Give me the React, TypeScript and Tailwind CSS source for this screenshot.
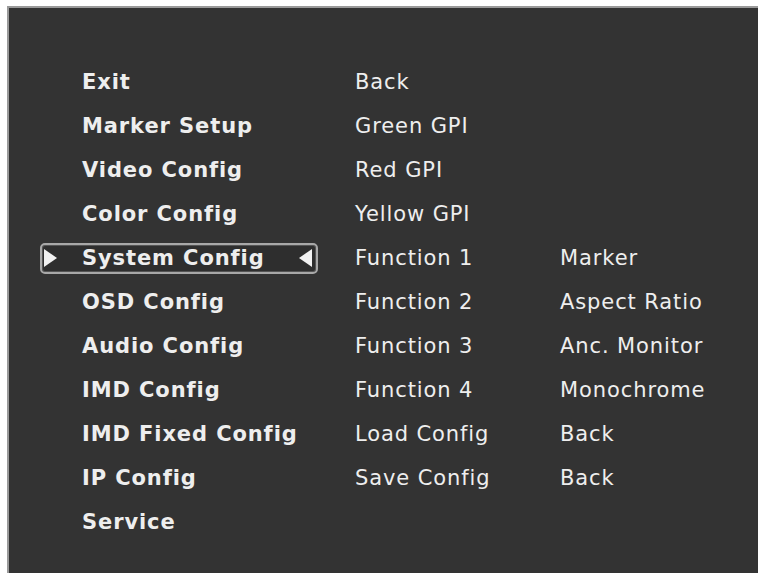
import React from "react";

const rows: [string, string, string][] = [
  ["Exit", "Back", ""],
  ["Marker Setup", "Green GPI", ""],
  ["Video Config", "Red GPI", ""],
  ["Color Config", "Yellow GPI", ""],
  ["System Config", "Function 1", "Marker"],
  ["OSD Config", "Function 2", "Aspect Ratio"],
  ["Audio Config", "Function 3", "Anc. Monitor"],
  ["IMD Config", "Function 4", "Monochrome"],
  ["IMD Fixed Config", "Load Config", "Back"],
  ["IP Config", "Save Config", "Back"],
  ["Service", "", ""],
];

const SELECTED = 4;

function Arrow({ dir }: { dir: "left" | "right" }) {
  return (
    <svg width="15" height="20" viewBox="0 0 15 20" className="shrink-0">
      {dir === "right" ? (
        <polygon points="1,1 14,10 1,19" fill="#f2f2f2" />
      ) : (
        <polygon points="14,1 1,10 14,19" fill="#f2f2f2" />
      )}
    </svg>
  );
}

export default function App() {
  const font = { fontFamily: '"DejaVu Sans", Verdana, sans-serif' };
  return (
    <div className="w-[762px] h-[573px] bg-white overflow-hidden pl-[7px] pt-[6px]" style={font}>
      <div className="w-[751px] h-[567px] bg-[#333333] border-l-2 border-t-2 border-[#9a9a9a] pt-[52px] pl-[31px]">
        <div className="grid grid-cols-[315px_205px_200px] auto-rows-[44px] text-[#eeeeee] text-[21px] leading-none tracking-[0.9px]">
          {rows.map(([a, b, c], i) => (
            <React.Fragment key={i}>
              <div className="flex items-center">
                <div
                  className={
                    "flex items-center w-[278px] h-[31px] rounded-[5px] border-2 pl-[1px] pr-[3px] " +
                    (i === SELECTED
                      ? "border-[#a8a8a8] bg-[#2e2e2e] shadow-[inset_0_0_0_1px_#555]"
                      : "border-transparent")
                  }
                >
                  <div className="w-[15px] h-[20px]">{i === SELECTED && <Arrow dir="right" />}</div>
                  <span className="ml-[24px] font-bold flex-1">{a}</span>
                  <div className="w-[15px] h-[20px]">{i === SELECTED && <Arrow dir="left" />}</div>
                </div>
              </div>
              <div className="flex items-center">{b}</div>
              <div className="flex items-center">{c}</div>
            </React.Fragment>
          ))}
        </div>
      </div>
    </div>
  );
}
